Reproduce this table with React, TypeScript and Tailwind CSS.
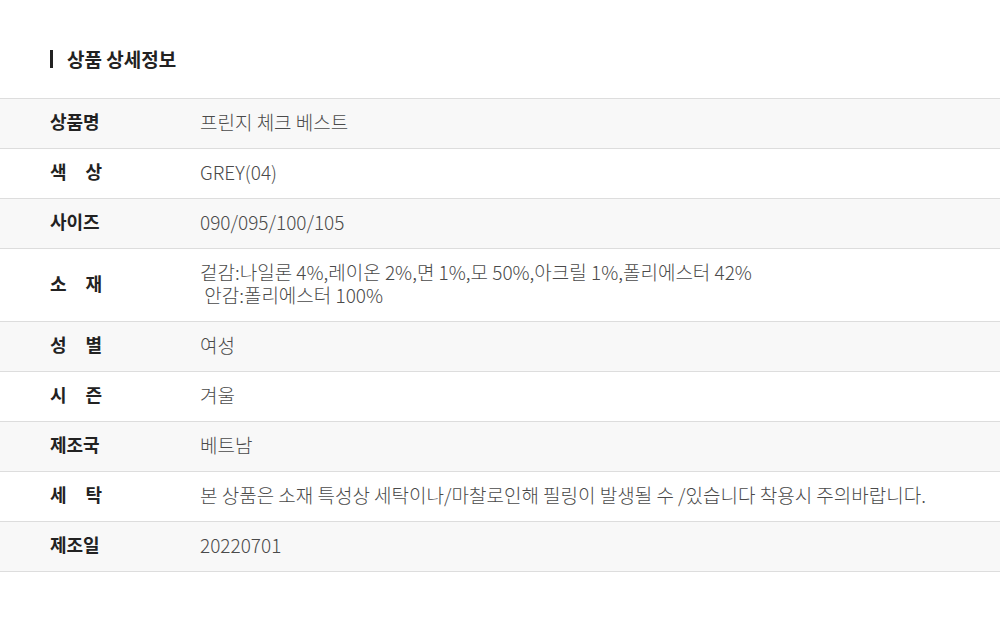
const rows: { label: string[]; value: string[] }[] = [
  { label: ["상품명"], value: ["프린지 체크 베스트"] },
  { label: ["색", "상"], value: ["GREY(04)"] },
  { label: ["사이즈"], value: ["090/095/100/105"] },
  {
    label: ["소", "재"],
    value: [
      "겉감:나일론 4%,레이온 2%,면 1%,모 50%,아크릴 1%,폴리에스터 42%",
      "\u00a0안감:폴리에스터 100%",
    ],
  },
  { label: ["성", "별"], value: ["여성"] },
  { label: ["시", "즌"], value: ["겨울"] },
  { label: ["제조국"], value: ["베트남"] },
  {
    label: ["세", "탁"],
    value: ["본 상품은 소재 특성상 세탁이나/마찰로인해 필링이 발생될 수 /있습니다 착용시 주의바랍니다."],
  },
  { label: ["제조일"], value: ["20220701"] },
];

export default function App() {
  return (
    <div className="min-h-[621px] w-[1000px] bg-white font-['Noto_Sans_CJK_KR',sans-serif]">
      <div className="flex items-center gap-[14px] px-[50px] pt-[48px] pb-[28px]">
        <span className="h-[18px] w-[3px] bg-[#222]" />
        <h2 className="text-[19px] font-bold leading-[22px] text-[#222]">상품 상세정보</h2>
      </div>

      <div className="border-t border-[#dddddd]">
        {rows.map((row, i) => (
          <div
            key={i}
            className={`flex items-center border-b border-[#dddddd] pb-[5px] ${
              row.value.length > 1 ? "min-h-[73px]" : "h-[50px]"
            } ${i % 2 === 0 ? "bg-[#f8f8f8]" : "bg-white"}`}
          >
            <div className="w-[200px] shrink-0 pl-[50px]">
              {row.label.length > 1 ? (
                <div className="flex w-[52px] justify-between text-[18px] font-bold leading-[22px] text-[#222]">
                  {row.label.map((c) => (
                    <span key={c}>{c}</span>
                  ))}
                </div>
              ) : (
                <div className="text-[18px] font-bold leading-[22px] text-[#222]">{row.label[0]}</div>
              )}
            </div>
            <div className="text-[19px] font-light leading-[23px] text-[#4a4a4a]">
              {row.value.map((v) => (
                <div key={v}>{v}</div>
              ))}
            </div>
          </div>
        ))}
      </div>
    </div>
  );
}
